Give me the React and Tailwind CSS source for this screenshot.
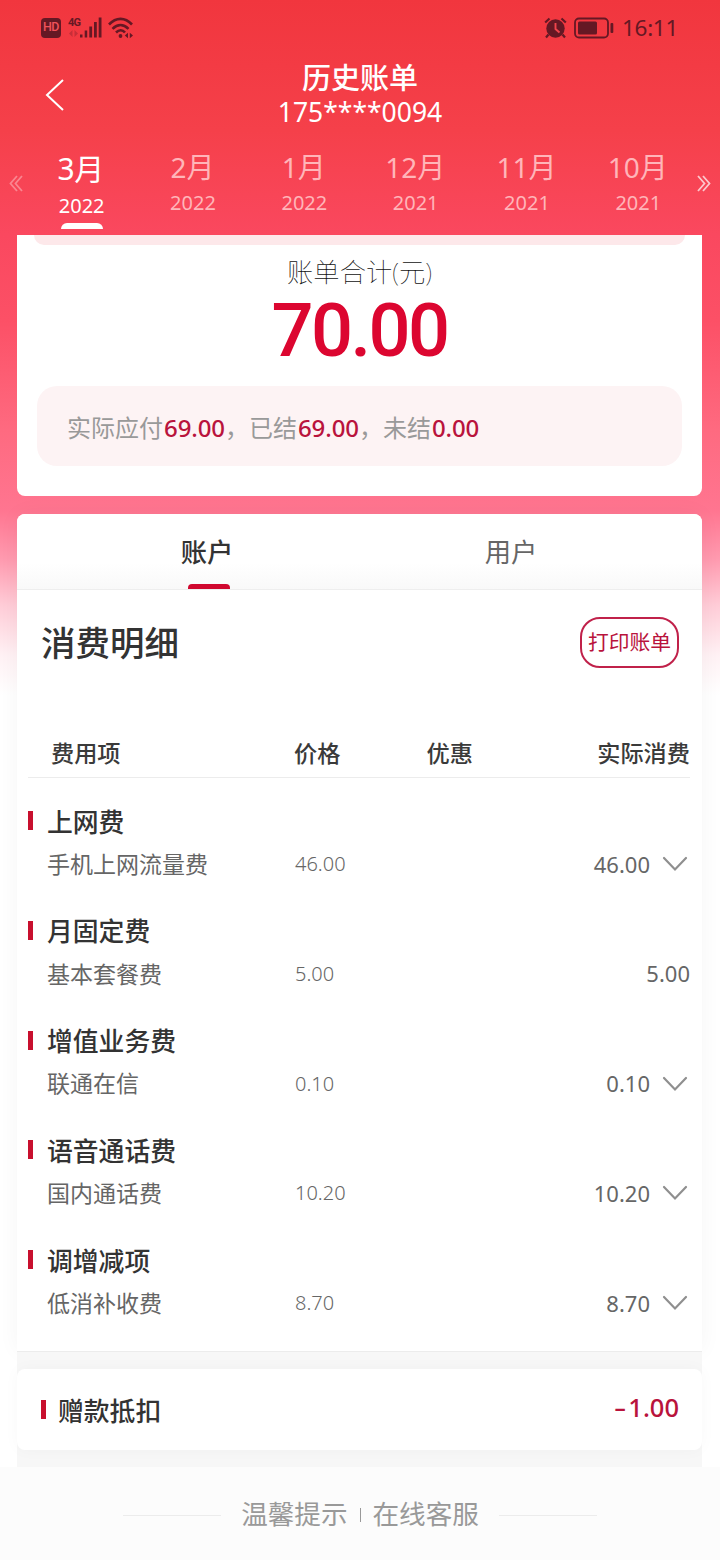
const months = [
  { month: "3月", year: "2022", active: true },
  { month: "2月", year: "2022" },
  { month: "1月", year: "2022" },
  { month: "12月", year: "2021" },
  { month: "11月", year: "2021" },
  { month: "10月", year: "2021" },
];

const fees = [
  { title: "上网费", name: "手机上网流量费", price: "46.00", actual: "46.00", expandable: true },
  { title: "月固定费", name: "基本套餐费", price: "5.00", actual: "5.00" },
  { title: "增值业务费", name: "联通在信", price: "0.10", actual: "0.10", expandable: true },
  { title: "语音通话费", name: "国内通话费", price: "10.20", actual: "10.20", expandable: true },
  { title: "调增减项", name: "低消补收费", price: "8.70", actual: "8.70", expandable: true },
];

function StatusBar() {
  return (
    <div className="flex h-[55px] items-center justify-between pl-[41px] pr-[42px] text-[#651824]">
      <div className="flex items-center">
        <div className="flex h-5 w-5 items-center justify-center rounded-[4px] bg-[#651824] font-[Roboto] text-[12.500px] leading-none font-medium tracking-[-0.5px] text-[#f0525a]">
          HD
        </div>
        <div className="ml-[7px] flex h-6 w-[35px]">
          <div className="flex w-3 shrink-0 flex-col items-start">
            <span className="font-[Roboto] text-[11px] leading-[13px] font-bold tracking-[-0.8px]">4G</span>
            <svg width="11" height="9" viewBox="0 0 11 9" fill="currentColor" className="opacity-30">
              <path d="M4.500 1v7L1 4.500zM6.500 1v7L10 4.500z" />
            </svg>
          </div>
          <svg width="23" height="24" viewBox="0 0 23 24" fill="currentColor" className="shrink-0">
            <rect x="0" y="18.500" width="2.500" height="3" />
            <rect x="4.700" y="14.500" width="2.500" height="7" />
            <rect x="9.300" y="10.500" width="2.800" height="11" />
            <rect x="14" y="6" width="2.800" height="15.500" />
            <rect x="18.700" y="1.500" width="2.800" height="20" />
          </svg>
        </div>
        <svg width="26" height="22" viewBox="0 0 26 22" className="ml-[5px]" fill="none" stroke="currentColor" strokeWidth="2.600">
          <path d="M1 7.500C8 0 17 0 24 7.500" />
          <path d="M4.500 11.800c5-5 11-5 16 0" />
          <path d="M8 15.500c3-3 6.500-3 9 0" />
          <circle cx="12.500" cy="19" r="1.900" fill="currentColor" stroke="none" />
          <path d="M20 15.800v5.400L16.800 18.500zM21.800 15.800v5.400L25 18.500z" fill="currentColor" stroke="none" />
        </svg>
      </div>
      <div className="flex items-center">
        <svg width="23" height="22" viewBox="0 0 23 22" fill="currentColor">
          <circle cx="11.500" cy="11.500" r="9.200" />
          <path d="M1.200 5.500 5.500 1.500M21.800 5.500 17.500 1.500M4.500 17.500l-2.500 3M18.500 17.500l2.500 3" stroke="currentColor" strokeWidth="2.200" />
          <path d="M11.500 6v6l4 3.500" fill="none" stroke="#f0444c" strokeWidth="1.900" />
        </svg>
        <svg width="40" height="22" viewBox="0 0 40 22" className="ml-[7px] mr-px" fill="none" stroke="currentColor">
          <rect x="1" y="1.500" width="33" height="19" rx="4" strokeWidth="1.800" />
          <rect x="4" y="4.500" width="19" height="13" rx="1.500" fill="currentColor" stroke="none" />
          <rect x="36.500" y="6" width="2.800" height="10" rx="1" fill="currentColor" stroke="none" />
        </svg>
        <span className="ml-[7px] w-14 text-[22.500px] leading-6 tracking-[-0.3px] whitespace-nowrap">16:11</span>
      </div>
    </div>
  );
}

function Chevrons({ className }) {
  return (
    <svg width="14" height="17" viewBox="0 0 14 17" fill="none" stroke="#fff" strokeWidth="1.800" className={className}>
      <path d="M1 1l6.500 7.500L1 16M6 1l6.500 7.500L6 16" />
    </svg>
  );
}

function MonthTabs() {
  return (
    <div className="flex h-[100px] items-start justify-between px-[9px]">
      <Chevrons className="mt-[40px] shrink-0 rotate-180 opacity-35" />
      <div className="flex w-[668px] shrink-0">
        {months.map((m) => (
          <div key={m.month} className="flex flex-1 flex-col items-center text-white">
            {m.active ? (
              <>
                <div className="mt-[16px] pr-0.5 text-[30px] leading-9 tracking-[-0.5px]">{m.month}</div>
                <div className="mt-[5px] text-[20px] leading-7">{m.year}</div>
                <div className="mt-[3px] h-1.5 w-[42px] rounded-t-md bg-white" />
              </>
            ) : (
              <div className="flex flex-col items-center text-[#ffb5b9]">
                <div className="mt-[14px] pr-px text-[28px] leading-9">{m.month}</div>
                <div className="mt-[4px] text-[20px] leading-7">{m.year}</div>
              </div>
            )}
          </div>
        ))}
      </div>
      <Chevrons className="mt-[40px] shrink-0 opacity-70" />
    </div>
  );
}

function Header() {
  return (
    <div className="grid h-20 grid-cols-[100px_1fr_100px] text-white">
      <svg width="20" height="32" viewBox="0 0 20 32" fill="none" stroke="currentColor" strokeWidth="2" className="mt-6 ml-[45px]">
        <path d="M18 1 2 16l16 15" />
      </svg>
      <div className="flex flex-col items-center">
        <div className="mt-[5px] text-[29px] leading-9 font-medium">历史账单</div>
        <div className="text-[26.500px] leading-8">175****0094</div>
      </div>
    </div>
  );
}

function Summary() {
  return (
    <div className="mr-[18px] ml-[17px] flex h-[261px] flex-col items-center rounded-b-lg bg-white">
      <div className="h-2.5 w-[651px] rounded-b-xl bg-[#fde8ea]" />
      <div className="mt-[11px] text-[26.300px] leading-8 font-thin text-[#111]">账单合计(元)</div>
      <div className="mt-[7px] font-[Roboto] text-[74px] leading-[72px] font-medium tracking-[-2.600px] text-[#dc0630]">70.00</div>
      <div className="mt-[19px] flex h-20 w-[645px] items-center rounded-[20px] bg-[#fdf3f4] pt-[3px] pl-[30px] text-2xl text-[#999]">
        实际应付<Amount>69.00</Amount>，已结<Amount>69.00</Amount>，未结<Amount>0.00</Amount>
      </div>
    </div>
  );
}

function Amount({ children }) {
  return <span className="ml-px font-medium tracking-[-0.1px] text-[#b9133c]">{children}</span>;
}

function FeeRow({ fee }) {
  return (
    <div className="h-[109.750px]">
      <div className="flex h-[43px] items-center">
        <div className="h-[19px] w-[5px] bg-[#c8102e]" />
        <div className="ml-[14px] pt-[3px] text-[25.800px] font-medium text-[#333]">{fee.title}</div>
      </div>
      <div className="flex h-[43px] items-center pt-px text-[23px] text-[#666]">
        <div className="ml-[19px] w-[248px]">{fee.name}</div>
        <div className="text-[20px] font-light">{fee.price}</div>
        <div className="ml-auto text-[22px]">{fee.actual}</div>
        {fee.expandable && (
          <svg width="28" height="16" viewBox="0 0 28 16" fill="none" stroke="#8f8f8f" strokeWidth="2.200" strokeLinecap="round" className="ml-3">
            <path d="M2 2l11 11.500L24 2" />
          </svg>
        )}
      </div>
    </div>
  );
}

function Details() {
  return (
    <div className="mt-[18px] mr-[18px] ml-[17px] h-[837px] rounded-t-lg bg-white shadow-[0_0_22px_rgba(0,0,0,0.045)]">
      <div className="flex h-[76px] rounded-t-lg border-b border-[#eeeeee] bg-linear-to-b from-white from-65% to-[#f9f9f9] px-[38px] text-[26.300px]">
        <div className="flex flex-1 flex-col items-center font-medium text-[#333]">
          <div className="mt-[18px] h-[52px] leading-10">账户</div>
          <div className="ml-[3px] h-[5px] w-[42px] shrink-0 rounded-t bg-[#d0082f]" />
        </div>
        <div className="flex-1 pt-[18px] pr-px text-center leading-10 text-[#666]">用户</div>
      </div>
      <div className="flex h-[105px] items-center justify-between pr-[23px] pl-[24px]">
        <h2 className="text-[34.500px] font-medium text-[#333]">消费明细</h2>
        <button className="flex h-[51px] w-[99px] items-center justify-center rounded-[20px] border-2 border-[#c0214a] text-[20.800px] whitespace-nowrap text-[#b9133c]">
          打印账单
        </button>
      </div>
      <div className="mr-3 ml-[11px] mt-[33px] flex h-[50px] items-center border-b border-[#ececec] pt-0.5 text-[23.200px] font-medium text-[#3a3a3a]">
        <div className="ml-[23px] w-[243px]">费用项</div>
        <div className="w-[132.500px]">价格</div>
        <div>优惠</div>
        <div className="ml-auto">实际消费</div>
      </div>
      <div className="mt-[21px] mr-3 ml-[11px]">
        {fees.map((fee) => (
          <FeeRow key={fee.title} fee={fee} />
        ))}
      </div>
    </div>
  );
}

function Footer() {
  return (
    <div className="flex h-[93px] items-center justify-center bg-[#fcfcfc] pt-[3px] text-[26.600px] text-[#999]">
      <div className="mr-5 h-px w-[98px] bg-[#ececec]" />
      <span>温馨提示</span>
      <div className="mx-[12px] h-3.5 w-px bg-[#999]" />
      <span>在线客服</span>
      <div className="ml-5 h-px w-[98px] bg-[#ececec]" />
    </div>
  );
}

export default function App() {
  return (
    <div
      lang="zh-CN"
      className="h-[1560px] w-[720px] overflow-hidden bg-white bg-[linear-gradient(to_bottom,#f1363e_0px,#f5404a_130px,#fa485f_235px,#fc5066_320px,#fe6a80_430px,#ff7590_510px,#ff9bb0_560px,#ffccd7_605px,#fff1f4_655px,#ffffff_695px)] font-['Noto_Sans','Noto_Sans_CJK_SC',sans-serif]"
    >
      <StatusBar />
      <Header />
      <MonthTabs />
      <Summary />
      <Details />
      <div className="mr-[18px] ml-[17px] h-[116px] border-t border-[#ececec] bg-[#f7f7f7] pt-[17px]">
        <div className="flex h-[81px] items-center rounded-lg bg-white pr-[23px] pl-[24px] shadow-[0_0_16px_rgba(0,0,0,0.03)]">
          <div className="h-[19px] w-[5px] bg-[#c8102e]" />
          <div className="ml-[12px] pt-[3px] text-[25.800px] font-medium text-[#333]">赠款抵扣</div>
          <div className="ml-auto pb-1 text-[25.500px] font-medium text-[#b9133c]">
            <span className="mr-0.5 inline-block origin-right scale-x-150">-</span>1.00
          </div>
        </div>
      </div>
      <Footer />
    </div>
  );
}
